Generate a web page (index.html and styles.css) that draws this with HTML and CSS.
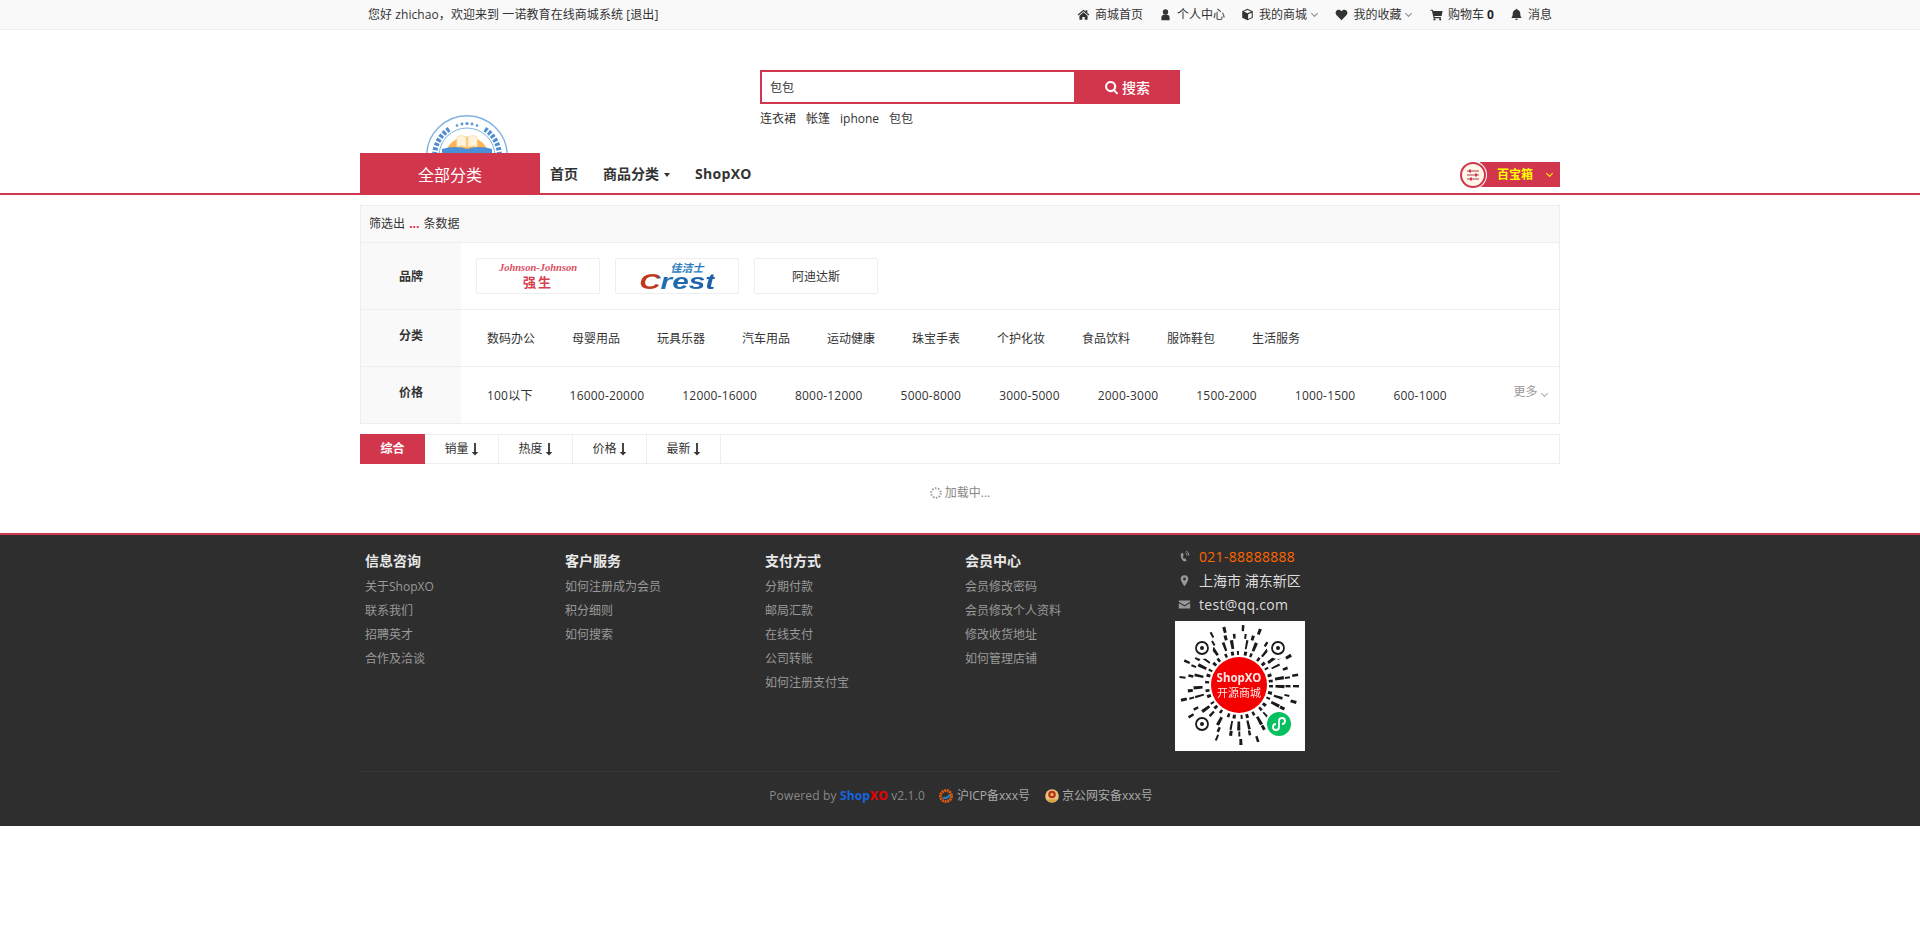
FILE: index.html
```html
<!DOCTYPE html>
<html lang="zh-CN">
<head>
<meta charset="utf-8">
<title>商品搜索</title>
<link rel="stylesheet" href="styles.css">
</head>
<body>
<svg class="defs" width="0" height="0" aria-hidden="true">
  <symbol id="i-home" viewBox="0 0 16 16"><path d="M8 2 .8 8l.9 1.1L8 3.900l6.300 5.200 .9-1.100L12.700 6V2.800h-2v1.500zM3 9.400V14.500h3.500v-3.500h3v3.500H13V9.400L8 5.300z"/></symbol>
  <symbol id="i-user" viewBox="0 0 16 16"><path d="M8 1.500a3.300 3.300 0 1 1 0 6.600 3.300 3.300 0 0 1 0-6.600zM3 15v-3.500C3 9.500 4.300 8.300 6 8.300h4c1.700 0 3 1.200 3 3.200V15z"/></symbol>
  <symbol id="i-cube" viewBox="0 0 16 16"><path d="M8 1 14.500 4v8L8 15 1.500 12V4zM8 2.400 3.500 4.400 8 6.400l4.500-2zM8.800 7.700v5.700l4.400-2.100V5.700z"/></symbol>
  <symbol id="i-heart" viewBox="0 0 16 16"><path d="M8 15 1.700 8.600C-.4 6.200 1.100 2 4.500 2 6 2 7.300 2.800 8 4c.7-1.200 2-2 3.500-2 3.400 0 4.900 4.200 2.800 6.600z"/></symbol>
  <symbol id="i-cart" viewBox="0 0 16 16"><path d="M.5 2H3.500l.4 1.800H15.500l-1.200 6H5.300l.3 1.400H13.500v1.300H4.400L2.400 3.300H.5z"/><circle cx="5.500" cy="14" r="1.300"/><circle cx="12.500" cy="14" r="1.300"/></symbol>
  <symbol id="i-bell" viewBox="0 0 16 16"><path d="M8 1c.6 0 1 .4 1 1 2.500.5 3.600 2.500 3.600 4.600 0 3 .5 4.300 1.700 5.600H1.700C2.900 10.900 3.400 9.600 3.400 6.600 3.400 4.500 4.500 2.500 7 2c0-.6.4-1 1-1zM6.300 13.200h3.400a1.700 1.700 0 0 1-3.400 0z"/></symbol>
  <symbol id="i-search" viewBox="0 0 16 16"><path d="M7 1a6 6 0 0 1 4.800 9.600l3.400 3.400-1.500 1.500-3.400-3.400A6 6 0 1 1 7 1zm0 2.300a3.700 3.700 0 1 0 0 7.400 3.700 3.700 0 0 0 0-7.400z"/></symbol>
  <symbol id="i-phone" viewBox="0 0 16 16"><path d="M3.500 4.500 6 3.500 7 7 5.800 8c.3 1.300.7 2 1.500 2.800L8.700 10l2 2.800-1.900 1.500C5 13.500 2.800 8.500 3.500 4.500z"/><path d="M9 3.500a3 3 0 0 1 2.200 3.200M10 1.500a5 5 0 0 1 3.300 5.400" fill="none" stroke="currentColor" stroke-width="1.200"/></symbol>
  <symbol id="i-pin" viewBox="0 0 16 16"><path d="M8 1.500a4.600 4.600 0 0 1 4.600 4.600c0 2.500-3 6.900-4.600 8.900-1.600-2-4.600-6.400-4.600-8.900A4.600 4.600 0 0 1 8 1.500zm0 2.800a1.800 1.800 0 1 0 0 3.600 1.800 1.800 0 0 0 0-3.600z"/></symbol>
  <symbol id="i-mail" viewBox="0 0 16 16"><path d="M1 3h14v1.500L8 8.800 1 4.500zM1 6.200 8 10.500l7-4.300V13H1z"/></symbol>
  <symbol id="i-down" viewBox="0 0 8 14"><path d="M3.100 1h1.800v9H7.300L4 13.500 .7 10h2.400z"/></symbol>
</svg>

<div class="topbar">
  <div class="wrap topbar-in">
    <div class="welcome">您好 zhichao，欢迎来到 一诺教育在线商城系统 [退出]</div>
    <ul class="topnav">
      <li><svg class="ti"><use href="#i-home"/></svg>商城首页</li>
      <li><svg class="ti"><use href="#i-user"/></svg>个人中心</li>
      <li><svg class="ti"><use href="#i-cube"/></svg>我的商城<i class="chev"></i></li>
      <li><svg class="ti"><use href="#i-heart"/></svg>我的收藏<i class="chev"></i></li>
      <li><svg class="ti"><use href="#i-cart"/></svg>购物车&nbsp;<b>0</b></li>
      <li><svg class="ti"><use href="#i-bell"/></svg>消息</li>
    </ul>
  </div>
</div>

<header class="wrap header">
  <div class="logo">
    <svg width="84" height="84" viewBox="0 0 84 84">
      <circle cx="42" cy="42" r="40.300" fill="#fff" stroke="#7fb2e2" stroke-width="1.400"/>
      <circle cx="42" cy="42" r="28" fill="none" stroke="#7fb2e2" stroke-width="1"/>
      <path d="M10.500 50A32.500 32.500 0 0 1 25 14.500M73.500 50A32.500 32.500 0 0 0 59 14.500" fill="none" stroke="#4f8fd0" stroke-width="5" stroke-dasharray="3 1.600"/>
      <g fill="#5a93cf"><circle cx="32" cy="11.500" r="1.300"/><circle cx="37" cy="10" r="1.400"/><circle cx="42" cy="9.500" r="1.600"/><circle cx="47" cy="10" r="1.400"/><circle cx="52" cy="11.500" r="1.300"/></g>
      <circle cx="42" cy="45" r="22.500" fill="#fdb653"/>
      <path d="M17 35 Q30 31 42 35 Q54 31 67 35 V84 H17z" fill="#4a90d9"/>
      <path d="M32 22.500 Q37 20.500 41 23 V33 Q37 31 32 32.500zM43 23 Q47 20.500 52 22.500 V32.500 Q47 31 43 33z" fill="#fff3dc" stroke="#fde2b5" stroke-width="1"/>
    </svg>
  </div>
  <div class="search">
    <form class="search-form">
      <div class="search-input">包包</div>
      <div class="search-btn"><svg class="si"><use href="#i-search"/></svg>搜索</div>
    </form>
    <ul class="hot">
      <li>连衣裙</li>
      <li>帐篷</li>
      <li>iphone</li>
      <li>包包</li>
    </ul>
  </div>
</header>

<nav class="mainnav">
  <div class="wrap nav-in">
    <div class="allcat">全部分类</div>
    <ul class="navlist">
      <li class="n1">首页</li>
      <li class="n2">商品分类<i class="caret"></i></li>
      <li class="n3">ShopXO</li>
    </ul>
    <div class="box">
      <span class="box-ico">
        <svg width="26" height="26" viewBox="0 0 26 26">
          <circle cx="13" cy="13" r="12" fill="#fff6ea" stroke="#d2364c" stroke-width="2"/>
          <path d="M7 9h12M7 13h12M7 17h12" stroke="#b8384a" stroke-width="1.200"/>
          <path d="M10 7.500v3M16 11.500v3M11 15.500v3" stroke="#d2364c" stroke-width="2"/>
        </svg>
      </span>
      <span class="box-t">百宝箱</span>
      <i class="chev chev-y"></i>
    </div>
  </div>
</nav>

<main class="wrap">
  <section class="filter">
    <div class="filter-head">筛选出 <em>...</em> 条数据</div>
    <div class="frow frow-brand">
      <div class="flabel">品牌</div>
      <div class="brands">
        <div class="brand">
          <span class="jj">Johnson-Johnson</span>
          <span class="jj-cn">强生</span>
        </div>
        <div class="brand">
          <span class="cr-cn">佳洁士</span>
          <span class="crest">Crest</span>
        </div>
        <div class="brand brand-t">阿迪达斯</div>
      </div>
    </div>
    <div class="frow frow-cat">
      <div class="flabel">分类</div>
      <ul class="cats">
        <li>数码办公</li><li>母婴用品</li><li>玩具乐器</li><li>汽车用品</li><li>运动健康</li><li>珠宝手表</li><li>个护化妆</li><li>食品饮料</li><li>服饰鞋包</li><li>生活服务</li>
      </ul>
    </div>
    <div class="frow frow-price">
      <div class="flabel">价格</div>
      <ul class="prices">
        <li>100以下</li><li>16000-20000</li><li>12000-16000</li><li>8000-12000</li><li>5000-8000</li><li>3000-5000</li><li>2000-3000</li><li>1500-2000</li><li>1000-1500</li><li>600-1000</li>
      </ul>
      <div class="more">更多<i class="chev chev-g"></i></div>
    </div>
  </section>

  <ul class="tabs">
    <li class="tab tab-on">综合</li>
    <li class="tab">销量<svg class="down"><use href="#i-down"/></svg></li>
    <li class="tab">热度<svg class="down"><use href="#i-down"/></svg></li>
    <li class="tab">价格<svg class="down"><use href="#i-down"/></svg></li>
    <li class="tab">最新<svg class="down"><use href="#i-down"/></svg></li>
  </ul>

  <div class="loading">
    <svg class="spin" width="12" height="12" viewBox="0 0 12 12"><circle cx="6" cy="6" r="4.800" fill="none" stroke="#999" stroke-width="2" stroke-dasharray="1.500 1.500"/></svg>
    加载中...
  </div>
</main>

<footer class="footer">
  <div class="wrap foot-main">
    <div class="fcol">
      <h4>信息咨询</h4>
      <a>关于ShopXO</a><a>联系我们</a><a>招聘英才</a><a>合作及洽谈</a>
    </div>
    <div class="fcol">
      <h4>客户服务</h4>
      <a>如何注册成为会员</a><a>积分细则</a><a>如何搜索</a>
    </div>
    <div class="fcol">
      <h4>支付方式</h4>
      <a>分期付款</a><a>邮局汇款</a><a>在线支付</a><a>公司转账</a><a>如何注册支付宝</a>
    </div>
    <div class="fcol">
      <h4>会员中心</h4>
      <a>会员修改密码</a><a>会员修改个人资料</a><a>修改收货地址</a><a>如何管理店铺</a>
    </div>
    <div class="contact">
      <div class="cline cline-tel"><svg class="ci"><use href="#i-phone"/></svg>021-88888888</div>
      <div class="cline"><svg class="ci"><use href="#i-pin"/></svg>上海市 浦东新区</div>
      <div class="cline cline-mail"><svg class="ci"><use href="#i-mail"/></svg>test@qq.com</div>
      <svg class="qr" width="130" height="130" viewBox="0 0 130 130">
        <rect width="130" height="130" fill="#fff"/>
        <g fill="none" stroke="#1a1a1a">
          <circle cx="64" cy="64" r="57" stroke-width="6" stroke-dasharray="2.500 13 3 19 2 11 3 16 2.500 14 3 22 2 12 3 17 2.500 15 3 20 2 14"/>
          <circle cx="64" cy="64" r="49" stroke-width="5" stroke-dasharray="2.500 7 2 11 3 6 2.500 9 2 5 3 12 2.500 8 2 6 3 10"/>
          <circle cx="64" cy="64" r="41" stroke-width="9" stroke-dasharray="3 8 2.500 5 3 12 2 6 3 9 2.500 7 3 5 2 10"/>
          <circle cx="64" cy="64" r="32" stroke-width="4" stroke-dasharray="2.500 4 3 3 2 5 3 3 2.500 6"/>
        </g>
        <g fill="#fff"><circle cx="27" cy="27" r="11"/><circle cx="103" cy="27" r="11"/><circle cx="27" cy="103" r="11"/></g>
        <g fill="none" stroke="#1a1a1a" stroke-width="1.800"><circle cx="27" cy="27" r="6"/><circle cx="103" cy="27" r="6"/><circle cx="27" cy="103" r="6"/></g>
        <g fill="#1a1a1a"><circle cx="27" cy="27" r="2"/><circle cx="103" cy="27" r="2"/><circle cx="27" cy="103" r="2"/></g>
        <circle cx="64" cy="64" r="28" fill="#f50000"/>
        <text class="qr-a" x="64" y="61" text-anchor="middle">ShopXO</text>
        <text class="qr-b" x="64" y="76" text-anchor="middle">开源商城</text>
        <circle cx="104" cy="103" r="14" fill="#fff"/>
        <circle cx="104" cy="103" r="12" fill="#07c160"/>
        <path d="M104 101v5a3 3 0 1 1-3-3M104 105v-5a3 3 0 1 1 3 3" fill="none" stroke="#fff" stroke-width="1.800"/>
      </svg>
    </div>
  </div>
  <div class="foot-bottom">
    <span class="pw">Powered by <b class="sx"><span class="sx1">Shop</span><span class="sx2">XO</span></b> v2.1.0</span>
    <svg class="bi" width="16" height="16" viewBox="0 0 16 16"><circle cx="8" cy="8" r="5.500" fill="none" stroke="#d8590f" stroke-width="3" stroke-dasharray="2 .6"/><path d="M5 9.500C8 11 11 9 11.500 6.500" fill="none" stroke="#2a7fc0" stroke-width="2"/></svg>
    <span class="beian">沪ICP备xxx号</span>
    <svg class="bi bi2" width="16" height="16" viewBox="0 0 16 16"><circle cx="8" cy="8" r="6.800" fill="#e8c27a"/><circle cx="8" cy="6.500" r="3.800" fill="#b8321f"/><circle cx="8" cy="6.500" r="1.500" fill="#f2c94c"/><path d="M3 11.500h10l-1.500 2.500h-7z" fill="#d9a441"/></svg>
    <span class="beian">京公网安备xxx号</span>
  </div>
</footer>
</body>
</html>
```

FILE: styles.css
```css
* { box-sizing: border-box; }
html, body { margin: 0; padding: 0; }
body {
  font: 12px/1.5 "Open Sans", "Noto Sans CJK SC", sans-serif;
  color: #333;
  background: #fff;
}
ul { list-style: none; margin: 0; padding: 0; }
i, em { font-style: normal; }
.defs { position: absolute; }
.wrap { width: 1200px; margin: 0 auto; }

/* top bar */
.topbar { height: 30px; background: #f9f9f9; border-bottom: 1px solid #eee; }
.topbar-in { display: flex; justify-content: space-between; align-items: center; height: 29px; padding: 0 8px; }
.welcome { letter-spacing: .07px; }
.topnav { display: flex; align-items: center; }
.topnav li { display: flex; align-items: center; margin-left: 16px; white-space: nowrap; }
.topnav b { color: #222; }
.ti { width: 13px; height: 13px; margin-right: 5px; fill: #333; }
.chev {
  display: inline-block; width: 5px; height: 5px; margin: -3px 2.500px 0 5px;
  border-right: 1px solid #888; border-bottom: 1px solid #888; transform: rotate(45deg);
}

/* header */
.header { height: 123px; display: flex; overflow: hidden; }
.logo { width: 400px; padding: 84px 0 0 65px; }
.logo svg { display: block; }
.search { padding-top: 40px; width: 420px; }
.search-form { display: flex; height: 34px; margin: 0; }
.search-input {
  width: 314px; border: 2px solid #d2364c; border-right: 0; padding: 1px 8px 0;
  line-height: 30px; color: #333;
}
.search-btn {
  flex: 1; display: flex; align-items: center; justify-content: center;
  background: #d2364c; color: #fff; font-size: 14px; font-weight: 500;
}
.si { width: 15px; height: 15px; fill: #fff; margin-right: 3px; }
.hot { display: flex; gap: 10px; margin-top: 6px; line-height: 18px; }

/* nav */
.mainnav { height: 42px; border-bottom: 2px solid #d2364c; }
.nav-in { display: flex; align-items: stretch; height: 42px; }
.allcat {
  width: 180px; background: #d2364c; color: #fff; font-size: 16px; text-align: center;
  line-height: 44px; height: 42px;
}
.navlist { display: flex; align-items: center; height: 40px; padding-left: 10px; font-size: 14px; font-weight: 700; color: #333; }
.n2 { margin-left: 25px; }
.n3 { margin-left: 25px; letter-spacing: .3px; }
.caret {
  display: inline-block; margin-left: 5px; vertical-align: middle;
  border-left: 3px solid transparent; border-right: 3px solid transparent; border-top: 4px solid #333;
}
.box {
  position: relative; margin-left: auto; margin-top: 9px; height: 25px; width: 80px;
  background: #d2364c; display: flex; align-items: center; padding-left: 17px;
}
.box-ico {
  position: absolute; left: -21px; top: -1px; width: 28px; height: 28px; border-radius: 50%;
  background: #fff; display: flex; align-items: center; justify-content: center;
}
.box-ico svg { display: block; }
.box-t { color: #ff0; font-weight: 700; }
.chev-y { border-color: #ff0; margin-left: 14px; border-width: 0 1.5px 1.5px 0; }

/* filter */
.filter { margin-top: 10px; border: 1px solid #eee; }
.filter-head { height: 37px; line-height: 35px; padding-left: 8px; background: #f9f9f9; border-bottom: 1px solid #eee; }
.filter-head em { color: #e4233c; font-weight: 700; margin: 0 1px; }
.frow { display: flex; align-items: stretch; border-bottom: 1px solid #eee; }
.frow:last-child { border-bottom: 0; }
.frow-brand { height: 67px; }
.frow-cat { height: 57px; }
.frow-price { height: 56px; position: relative; }
.flabel {
  width: 100px; background: #f9f9f9; font-weight: 700; color: #333;
  display: flex; align-items: center; justify-content: center;
}
.frow-brand .flabel { padding-top: 1px; }
.frow-cat .flabel { padding-bottom: 5px; }
.frow-price .flabel { padding-bottom: 5px; }
.brands { display: flex; gap: 15px; padding: 15px 0 0 15px; }
.brand {
  width: 124px; height: 36px; border: 1px solid #eee; border-radius: 2px;
  display: flex; flex-direction: column; align-items: center; justify-content: center; overflow: hidden;
}
.jj { font: italic 700 10.500px/12px "Liberation Serif", serif; color: #d8505f; }
.jj-cn { font: 700 13px/16px "Noto Sans CJK SC", sans-serif; color: #d8404f; letter-spacing: 2px; }
.cr-cn { font: italic 700 11px/11px "Noto Sans CJK SC", sans-serif; color: #2d7cc0; margin-left: 20px; }
.crest {
  display: block; transform: scaleX(1.35);
  font: italic 700 22px/18px "Liberation Sans", sans-serif;
  background: linear-gradient(90deg, #c2371e 0, #c2371e 24%, #1f6fb5 27%, #1e5fa8 100%);
  -webkit-background-clip: text; background-clip: text; color: transparent;
}
.brand-t { font-size: 12px; padding-top: 2px; }
.cats { display: flex; padding: 2px 0 0 7px; align-items: center; }
.cats li { width: 85px; padding-left: 19px; white-space: nowrap; flex: none; }
.prices { display: flex; padding: 1px 0 0 7px; align-items: center; letter-spacing: .2px; }
.prices li { flex: none; padding: 0 19px; white-space: nowrap; }
.prices li:first-child { padding-right: 18px; }
.more { position: absolute; right: 10px; top: 16px; color: #999; }
.chev-g { border-color: #aaa; margin-left: 4px; }

/* tabs */
.tabs { display: flex; margin-top: 10px; height: 30px; border: 1px solid #eee; }
.tab { width: 74px; border-right: 1px solid #eee; display: flex; align-items: center; justify-content: center; line-height: 28px; }
.tab-on { background: #d2364c; color: #fff; font-weight: 700; border-right: 0; margin: -1px 0 -1px -1px; height: 30px; width: 65px; }
.down { width: 8px; height: 14px; fill: #333; margin-left: 2px; }

.loading { height: 69px; padding-top: 19px; display: flex; justify-content: center; align-items: flex-start; color: #888; line-height: 20px; }
.spin { margin: 4px 3px 0 0; }

/* footer */
.footer { background: #2e2e2e; border-top: 2px solid #d2364c; height: 293px; }
.foot-main { display: flex; height: 236px; padding-left: 5px; }
.fcol { width: 200px; padding-top: 16px; }
.fcol h4 { margin: 0; height: 24px; font-size: 14px; line-height: 20px; font-weight: 700; color: #e8e8e8; }
.fcol a { display: block; line-height: 24px; color: #999; }
.contact { padding: 9px 0 0 10px; }
.cline { display: flex; align-items: center; height: 24px; font-size: 14px; color: #ddd; }
.cline-tel { color: #f60; letter-spacing: .3px; }
.cline-mail { letter-spacing: .3px; }
.ci { width: 13px; height: 13px; margin: 0 8px 0 3px; fill: #999; color: #999; flex: none; }
.qr { display: block; margin-top: 5px; }
.qr-a { font: 700 11.500px "Noto Sans", sans-serif; fill: #fff; opacity: .9; }
.qr-b { font: 11px "Noto Sans CJK SC", sans-serif; fill: #fff; opacity: .9; }
.foot-bottom {
  width: 1200px; margin: 0 auto; height: 55px; border-top: 1px solid #383838;
  display: flex; align-items: center; justify-content: center; color: #aaa; padding: 0 0 6px 2px;
}
.pw { color: #888; letter-spacing: .15px; }
.sx { font-size: 12px; }
.sx1 { color: #1565e0; }
.sx2 { color: #f10000; }
.bi { margin: 0 3px 0 13px; }
.bi2 { margin-left: 14px; margin-right: 2px; }
```
